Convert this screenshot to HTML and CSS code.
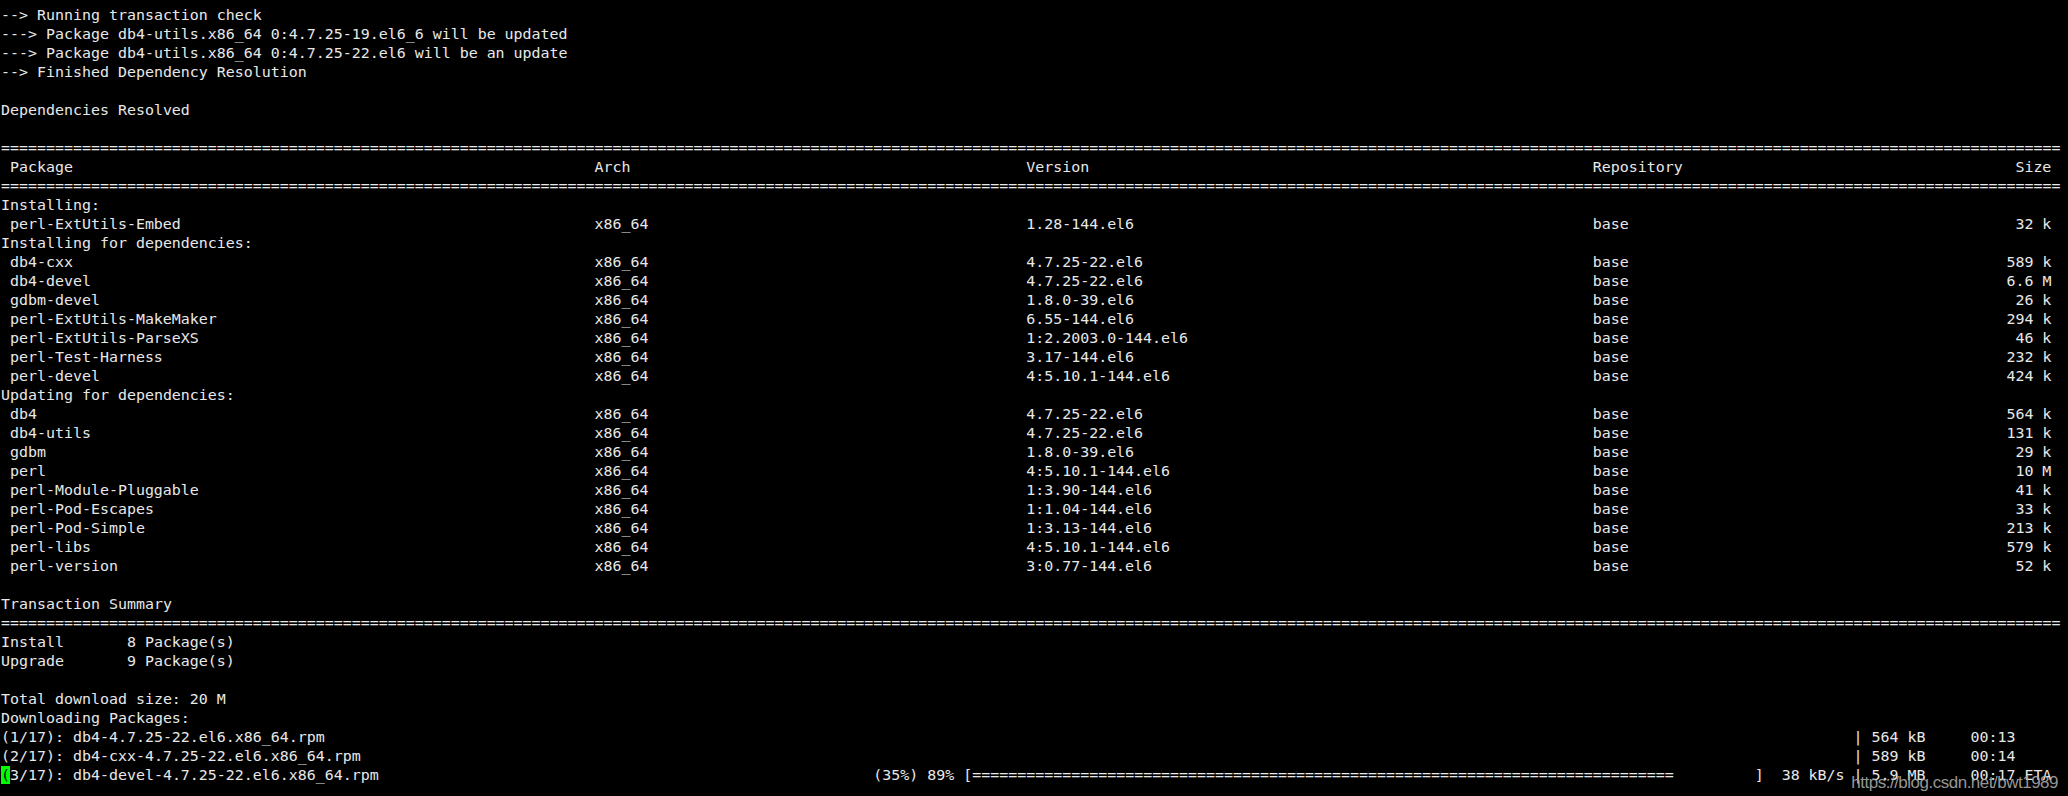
FILE: index.html
```html
<!DOCTYPE html>
<html lang="en">

<head>
    <meta charset="UTF-8">
    <title>yum update</title>
    <link rel="stylesheet" href="styles.css">
</head>

<body>
    <div class="term">
        <div class="line">--&gt; Running transaction check</div>
        <div class="line">---&gt; Package db4-utils.x86_64 0:4.7.25-19.el6_6 will be updated</div>
        <div class="line">---&gt; Package db4-utils.x86_64 0:4.7.25-22.el6 will be an update</div>
        <div class="line">--&gt; Finished Dependency Resolution</div>
        <div class="line"></div>
        <div class="line">Dependencies Resolved</div>
        <div class="line"></div>
        <div class="line rule">=====================================================================================================================================================================================================================================</div>
        <div class="line pkg">
            <span>Package</span><span>Arch</span><span>Version</span><span>Repository</span><span class="size">Size</span>
        </div>
        <div class="line rule">=====================================================================================================================================================================================================================================</div>

        <div class="line">Installing:</div>
        <div class="line pkg"><span>perl-ExtUtils-Embed</span><span>x86_64</span><span>1.28-144.el6</span><span>base</span><span class="size">32 k</span></div>

        <div class="line">Installing for dependencies:</div>
        <div class="line pkg"><span>db4-cxx</span><span>x86_64</span><span>4.7.25-22.el6</span><span>base</span><span class="size">589 k</span></div>
        <div class="line pkg"><span>db4-devel</span><span>x86_64</span><span>4.7.25-22.el6</span><span>base</span><span class="size">6.6 M</span></div>
        <div class="line pkg"><span>gdbm-devel</span><span>x86_64</span><span>1.8.0-39.el6</span><span>base</span><span class="size">26 k</span></div>
        <div class="line pkg"><span>perl-ExtUtils-MakeMaker</span><span>x86_64</span><span>6.55-144.el6</span><span>base</span><span class="size">294 k</span></div>
        <div class="line pkg"><span>perl-ExtUtils-ParseXS</span><span>x86_64</span><span>1:2.2003.0-144.el6</span><span>base</span><span class="size">46 k</span></div>
        <div class="line pkg"><span>perl-Test-Harness</span><span>x86_64</span><span>3.17-144.el6</span><span>base</span><span class="size">232 k</span></div>
        <div class="line pkg"><span>perl-devel</span><span>x86_64</span><span>4:5.10.1-144.el6</span><span>base</span><span class="size">424 k</span></div>

        <div class="line">Updating for dependencies:</div>
        <div class="line pkg"><span>db4</span><span>x86_64</span><span>4.7.25-22.el6</span><span>base</span><span class="size">564 k</span></div>
        <div class="line pkg"><span>db4-utils</span><span>x86_64</span><span>4.7.25-22.el6</span><span>base</span><span class="size">131 k</span></div>
        <div class="line pkg"><span>gdbm</span><span>x86_64</span><span>1.8.0-39.el6</span><span>base</span><span class="size">29 k</span></div>
        <div class="line pkg"><span>perl</span><span>x86_64</span><span>4:5.10.1-144.el6</span><span>base</span><span class="size">10 M</span></div>
        <div class="line pkg"><span>perl-Module-Pluggable</span><span>x86_64</span><span>1:3.90-144.el6</span><span>base</span><span class="size">41 k</span></div>
        <div class="line pkg"><span>perl-Pod-Escapes</span><span>x86_64</span><span>1:1.04-144.el6</span><span>base</span><span class="size">33 k</span></div>
        <div class="line pkg"><span>perl-Pod-Simple</span><span>x86_64</span><span>1:3.13-144.el6</span><span>base</span><span class="size">213 k</span></div>
        <div class="line pkg"><span>perl-libs</span><span>x86_64</span><span>4:5.10.1-144.el6</span><span>base</span><span class="size">579 k</span></div>
        <div class="line pkg"><span>perl-version</span><span>x86_64</span><span>3:0.77-144.el6</span><span>base</span><span class="size">52 k</span></div>
        <div class="line"></div>

        <div class="line">Transaction Summary</div>
        <div class="line rule">=====================================================================================================================================================================================================================================</div>
        <div class="line">Install       8 Package(s)</div>
        <div class="line">Upgrade       9 Package(s)</div>
        <div class="line"></div>
        <div class="line">Total download size: 20 M</div>
        <div class="line">Downloading Packages:</div>

        <div class="line dl">
            <span class="dl-name">(1/17): db4-4.7.25-22.el6.x86_64.rpm</span><span>| 564 kB     00:13</span>
        </div>
        <div class="line dl">
            <span class="dl-name">(2/17): db4-cxx-4.7.25-22.el6.x86_64.rpm</span><span>| 589 kB     00:14</span>
        </div>
        <div class="line dl">
            <span class="dl-file"><span class="cursor">(</span>3/17): db4-devel-4.7.25-22.el6.x86_64.rpm</span><span>(35%) 89% [</span><span class="bar-fill">==============================================================================</span><span class="bar-rest"></span><span>]  38 kB/s | 5.9 MB     00:17 ETA</span>
        </div>
    </div>

    <div class="watermark">https://blog.csdn.net/bwt1989</div>
</body>

</html>
```

FILE: styles.css
```css
body {
    margin: 0;
    min-height: 100vh;
    position: relative;
    background-color: #000;
    color: #e8e8e8;
    font-family: "DejaVu Sans Mono", monospace;
    font-size: 14.95px;
    line-height: 19px;
    overflow: hidden;
}

.term {
    padding: 6px 0 0 1px;
}

.line {
    height: 19px;
    white-space: pre;
}

/* separator lines are 229 columns wide */
.rule {
    width: 229ch;
}

/* yum table columns */
.pkg {
    display: grid;
    grid-template-columns: 66ch 48ch 63ch 23ch 28ch;
}

.pkg span:first-child {
    padding-left: 1ch;
}

.size {
    text-align: right;
}

.dl {
    display: flex;
}

.dl-name {
    width: 206ch;
}

.dl-file {
    width: 97ch;
}

.cursor {
    background: #00ff00;
    color: #000;
}

.bar-fill {
    display: inline-block;
    width: 78ch;
}

.bar-rest {
    display: inline-block;
    width: 9ch;
}

.watermark {
    position: absolute;
    right: 10px;
    bottom: 5px;
    font-family: "Liberation Sans", Arial, sans-serif;
    font-size: 17px;
    line-height: 1;
    letter-spacing: -0.5px;
    color: rgba(170, 170, 170, 0.9);
}
```
